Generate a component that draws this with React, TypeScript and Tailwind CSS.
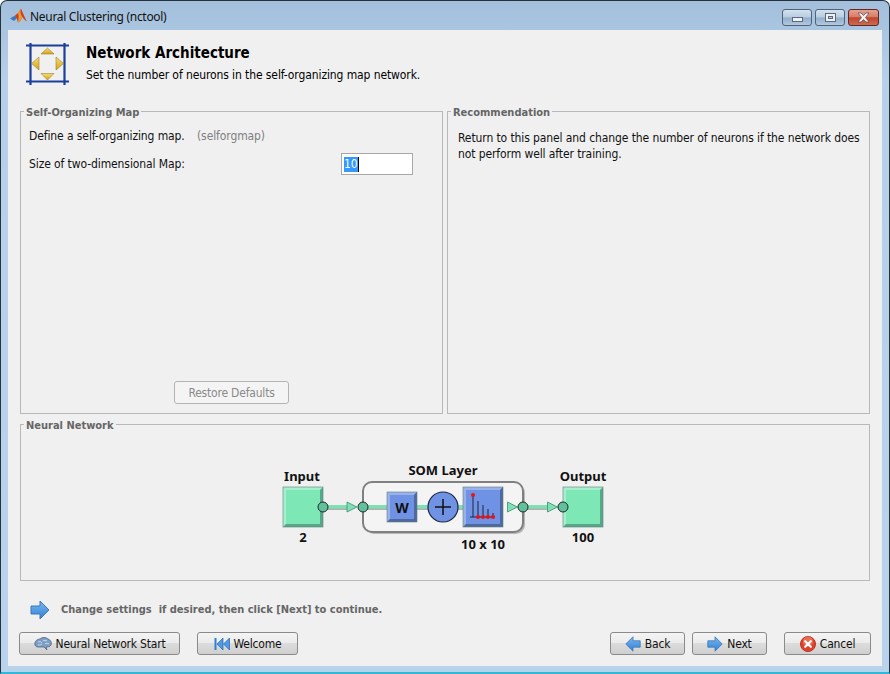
import React from "react";

const font = "[font-family:'DejaVu_Sans_Condensed','DejaVu_Sans',sans-serif]";

// Small blue arrow used on the Back / Next buttons and the hint row
const BlueArrow = ({ size = 16, flip = false }: { size?: number; flip?: boolean }) => (
  <svg width={size} height={size} viewBox="0 0 20 20" className={flip ? "-scale-x-100" : ""}>
    <defs>
      <linearGradient id="arrowFill" x1="0" y1="0" x2="0" y2="1">
        <stop offset="0" stopColor="#7db8f0" />
        <stop offset="1" stopColor="#2f7fd6" />
      </linearGradient>
    </defs>
    <path d="M1 6h9V1l9 9-9 9v-5H1z" fill="url(#arrowFill)" stroke="#3a78b8" strokeWidth="1" strokeLinejoin="round" />
  </svg>
);

const BrainIcon = () => (
  <svg width="18" height="14" viewBox="0 0 18 14">
    <path d="M1 8c-1-3 2-6 5-6 2-2 6-2 8 0 3 1 4 4 3 6-1 2-4 2-5 2l1 3-3-3H5C3 10 2 10 1 8z" fill="#7d9fc6" stroke="#52657c" strokeWidth="0.8" />
    <path d="M4 5c2-1 3 0 4 1M9 3c1 1 3 1 4 0M11 7c1-1 3-1 4 0M4 8c1 0 3 0 4-1" fill="none" stroke="#dbe6f2" strokeWidth="0.8" />
  </svg>
);

const RewindIcon = () => (
  <svg width="16" height="14" viewBox="0 0 16 14">
    <rect x="0.5" y="1" width="2" height="12" fill="#2f7fd6" />
    <path d="M9 1v12L3 7zM15.500 1v12L9.500 7z" fill="#4f9ae6" stroke="#2266b0" strokeWidth="0.7" />
  </svg>
);

const CancelIcon = () => (
  <svg width="16" height="16" viewBox="0 0 16 16">
    <circle cx="8" cy="8" r="7.500" fill="#e0432c" stroke="#b8321f" />
    <circle cx="8" cy="5.500" r="5" fill="#f08a70" opacity="0.6" />
    <path d="M5.200 5.200l5.600 5.600M10.800 5.200l-5.600 5.600" stroke="#fff" strokeWidth="2.200" strokeLinecap="round" />
  </svg>
);

const MatlabLogo = () => (
  <svg width="17" height="17" viewBox="0 0 17 17">
    <path d="M0 10.500l5-3 2 2.500-3 3z" fill="#3f78b8" />
    <path d="M5 7.500l3-2.500 3-4.500c1.500 3.500 3.500 9 6 13-2-1-3.500-3-4.500-4.500-1 2.500-3 5-4.500 5.500-.5-2.500-1.500-5-3-7z" fill="#c8401f" />
    <path d="M8 5l3-4.500c-1 3.500-.5 6 1.500 8.500-1 2.500-3 5-4.500 5.500.5-3 1-6 0-9.500z" fill="#ee9a2c" />
  </svg>
);

const ArchIcon = () => (
  <svg width="44" height="44" viewBox="0 0 44 44">
    <defs>
      <linearGradient id="gold" x1="0" y1="0" x2="0" y2="1">
        <stop offset="0" stopColor="#f4dc7a" />
        <stop offset="1" stopColor="#d4a418" />
      </linearGradient>
    </defs>
    <g stroke="#1a3f9c" strokeWidth="2.200">
      <path d="M0 2.500h43M0 38.500h43M4.500 0v42M38.500 0v42" />
    </g>
    <g stroke="#8a7010" strokeWidth="0.500" fill="url(#gold)">
      <path d="M21.500 5l6.500 6H15z" />
      <path d="M21.500 37l6.500-6.500H15z" />
      <path d="M5.500 20.500l7.500-6.500v13z" />
      <path d="M37.500 20.500l-7.500-6.500v13z" />
    </g>
  </svg>
);

const GroupBox = ({ title, className, children }: { title: string; className: string; children?: React.ReactNode }) => (
  <div className={`relative border border-[#b8b8b8] ${className}`}>
    <span className="absolute left-[3px] top-[-7px] bg-[#f0f0f0] px-[2px] text-[11px] leading-[16px] font-bold text-[#666]">
      {title}
    </span>
    {children}
  </div>
);

const WinButton = ({ className, children }: { className: string; children: React.ReactNode }) => (
  <button className={`flex h-[23px] items-center justify-center gap-[4px] rounded-[3px] border border-[#8a8a8a] bg-[linear-gradient(#f4f4f4_0%,#ececec_45%,#dcdcdc_50%,#cfcfcf_100%)] text-[12px] tracking-[-0.2px] text-[#111] ${className}`}>
    {children}
  </button>
);

const Bevel = ({ x, y, w, h, fill, light, dark }: { x: number; y: number; w: number; h: number; fill: string; light: string; dark: string }) => (
  <g>
    <rect x={x} y={y} width={w} height={h} fill={fill} />
    <path d={`M${x} ${y}h${w}l-3 3h${-(w - 6)}v${h - 6}l-3 3z`} fill={light} />
    <path d={`M${x + w} ${y}v${h}h${-w}l3-3h${w - 6}v${-(h - 6)}z`} fill={dark} />
    <rect x={x} y={y} width={w} height={h} fill="none" stroke="#5f7f78" strokeWidth="0.600" />
  </g>
);

const Node = ({ cx }: { cx: number }) => (
  <circle cx={cx} cy={507} r={5} fill="#62c09c" stroke="#1d2b28" strokeWidth="1" />
);

const Wire = ({ x1, x2 }: { x1: number; x2: number }) => (
  <g>
    <rect x={x1} y={506.500} width={x2 - x1} height={3.500} fill="#b0b0b0" />
    <rect x={x1} y={505} width={x2 - x1} height={3.500} fill="#7fe0b4" />
  </g>
);

const Arrowhead = ({ x }: { x: number }) => (
  <path d={`M${x} 502l10 5-10 5z`} fill="#7fe0b4" stroke="#3f8f70" strokeWidth="0.800" />
);

// Network diagram, drawn in page coordinates
const Diagram = () => {
  const label = { fontWeight: 700, fontSize: 13, fill: "#111", textAnchor: "middle" as const };
  return (
    <svg width="350" height="105" viewBox="270 455 350 105" className="[font-family:'Noto_Sans',sans-serif]">
      <Wire x1={326} x2={350} />
      <Arrowhead x={347} />
      <Wire x1={518} x2={550} />
      <rect x="365" y="484" width="160" height="50" rx="9" fill="#b8b8b8" />
      <rect x="363" y="482" width="160" height="50" rx="9" fill="#f4f4f4" stroke="#808080" strokeWidth="2" />
      <Wire x1={365} x2={465} />
      <Bevel x={283} y={487} w={40} h={40} fill="#7de8b6" light="#a4f0cc" dark="#55a888" />
      <Bevel x={387} y={492} w={30} h={30} fill="#7092e4" light="#9ab2ec" dark="#4f689f" />
      <text x="402" y="513" fontSize="14" fontWeight="700" textAnchor="middle" fill="#111">W</text>
      <circle cx="443" cy="507" r="15" fill="#7092e4" stroke="#1c2440" strokeWidth="1.200" />
      <path d="M435 507h16M443 499v16" stroke="#111" strokeWidth="1.500" />
      <Bevel x={463} y={487} w={40} h={40} fill="#7092e4" light="#9ab2ec" dark="#4f689f" />
      <g stroke="#1c2440" strokeWidth="1">
        <path d="M470 517h25" />
        <path d="M473 495v22M478 501v16M483 505v12M488 509v8M493 513v4" />
      </g>
      <g fill="#f01010">
        <circle cx="473" cy="495" r="2" />
        <circle cx="478" cy="517" r="2" />
        <circle cx="483" cy="517" r="2" />
        <circle cx="488" cy="517" r="2" />
        <circle cx="493" cy="517" r="2" />
      </g>
      <Arrowhead x={507.500} />
      <Arrowhead x={547.500} />
      <Bevel x={563} y={487} w={40} h={40} fill="#7de8b6" light="#a4f0cc" dark="#55a888" />
      <Node cx={323} />
      <Node cx={363} />
      <Node cx={523} />
      <Node cx={563} />
      <text x="302" y="481" {...label}>Input</text>
      <text x="303" y="542" {...label}>2</text>
      <text x="443" y="475" {...label}>SOM Layer</text>
      <text x="483" y="549" {...label}>10 x 10</text>
      <text x="583" y="481" {...label}>Output</text>
      <text x="583" y="542" {...label}>100</text>
    </svg>
  );
};

const CaptionButton = ({ className, children }: { className: string; children: React.ReactNode }) => (
  <div className={`flex h-[17px] items-center justify-center rounded-[3px] border border-[#4f6478] ${className}`}>
    {children}
  </div>
);

const App: React.FC = () => {
  return (
    <div className={`${font} flex h-[674px] w-[890px] flex-col overflow-hidden rounded-t-[7px] border border-b-2 border-[#26323c] border-b-[#2fb8d8] bg-[linear-gradient(#a3bfdb_0%,#b7d0ea_12%,#bad3ec_100%)] px-[7px] pb-[6px]`}>
      {/* Title bar */}
      <div className="flex h-[29px] shrink-0 items-center pt-[2px]">
        <div className="ml-[2px] flex items-center gap-[3px]">
          <MatlabLogo />
          <span className="text-[12px] tracking-[-0.3px] [font-family:'Noto_Sans',sans-serif] text-[#111]">Neural Clustering (nctool)</span>
        </div>
        <div className="ml-auto mr-[3px] mt-[-2px] flex gap-[3px] self-start pt-[8px]">
          <CaptionButton className="w-[30px] bg-[linear-gradient(#d4e1ef_0%,#b8cde2_48%,#94aec9_52%,#b0c8e0_100%)]">
            <div className="mt-[4px] h-[5px] w-[11px] border border-[#5a6a7c] bg-[#f0f0f0]" />
          </CaptionButton>
          <CaptionButton className="w-[30px] bg-[linear-gradient(#d4e1ef_0%,#b8cde2_48%,#94aec9_52%,#b0c8e0_100%)]">
            <div className="flex h-[9px] w-[11px] items-center justify-center border border-[#5a6a7c] bg-[#f0f0f0]">
              <div className="h-[3px] w-[5px] border border-[#5a6a7c] bg-[#b8cde2]" />
            </div>
          </CaptionButton>
          <CaptionButton className="w-[31px] border-[#5e2a24] bg-[linear-gradient(#e8a090_0%,#d97c68_45%,#c0452c_52%,#d06a50_100%)]">
            <svg width="13" height="11" viewBox="0 0 13 11">
              <path d="M1 1h3l2.500 2.500L9 1h3L8.500 5.500 12 10H9L6.500 7.500 4 10H1l3.500-4.500z" fill="#f2f2f2" stroke="#4a4a55" strokeWidth="0.700" />
            </svg>
          </CaptionButton>
        </div>
      </div>

      {/* Client area */}
      <div className="flex min-h-0 flex-1 flex-col bg-[#f0f0f0] px-[12px]">
        <div className="flex h-[81px] shrink-0 pl-[6px] pt-[13px]">
          <ArchIcon />
          <div className="ml-[16px] flex flex-col">
            <h1 className="text-[15px] leading-[20px] font-bold text-black">Network Architecture</h1>
            <p className="mt-[4px] text-[12px] leading-[16px] tracking-[-0.1px] text-black">
              Set the number of neurons in the self-organizing map network.
            </p>
          </div>
        </div>

        <div className="flex h-[303px] shrink-0 gap-[4px]">
          <GroupBox title="Self-Organizing Map" className="flex w-[423px] flex-col px-[8px]">
            <div className="mt-[16px] flex text-[12px] leading-[16px] tracking-[-0.1px] text-[#111]">
              <span className="w-[168px]">Define a self-organizing map.</span>
              <span className="text-[#808080]">(selforgmap)</span>
            </div>
            <div className="mt-[9px] flex items-center text-[12px] tracking-[-0.1px] text-[#111]">
              <span className="w-[312px]">Size of two-dimensional Map:</span>
              <div className="flex h-[22px] w-[72px] items-center border border-[#a8a8a8] bg-white pl-[2px]">
                <span className="bg-[#3399ff] text-[12px] leading-[15px] text-white">10</span>
                <span className="h-[15px] w-px bg-black" />
              </div>
            </div>
            <button className="mx-auto mb-[9px] mt-auto h-[23px] w-[115px] rounded-[3px] border border-[#b4b4b4] bg-[#f4f4f4] text-[12px] tracking-[-0.2px] text-[#8a8a8a]">
              Restore Defaults
            </button>
          </GroupBox>
          <GroupBox title="Recommendation" className="w-[423px] pl-[10px] pr-[4px]">
            <p className="mt-[18px] text-[12px] leading-[16px] tracking-[-0.1px] text-[#111]">
              Return to this panel and change the number of neurons if the network does not perform well after training.
            </p>
          </GroupBox>
        </div>

        <GroupBox title="Neural Network" className="mt-[10px] flex h-[157px] w-[850px] shrink-0 justify-center pt-[30px]">
          <Diagram />
        </GroupBox>

        <div className="flex h-[51px] shrink-0 items-center pl-[10px] pt-[7px]">
          <BlueArrow size={20} />
          <span className="ml-[11px] text-[11px] font-bold text-[#666]">
            Change settings&nbsp; if desired, then click [Next] to continue.
          </span>
        </div>

        <div className="ml-[-1px] flex shrink-0">
          <WinButton className="w-[161px]">
            <BrainIcon />
            Neural Network Start
          </WinButton>
          <WinButton className="ml-[17px] w-[101px]">
            <RewindIcon />
            Welcome
          </WinButton>
          <WinButton className="ml-auto w-[75px]">
            <BlueArrow flip />
            Back
          </WinButton>
          <WinButton className="ml-[7px] w-[75px]">
            <BlueArrow />
            Next
          </WinButton>
          <WinButton className="ml-[17px] mr-[-1px] w-[87px]">
            <CancelIcon />
            Cancel
          </WinButton>
        </div>
      </div>
    </div>
  );
};

export default App;
